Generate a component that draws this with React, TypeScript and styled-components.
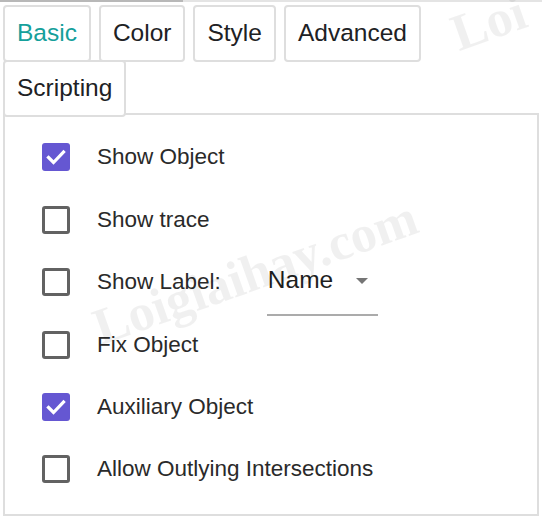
import React from "react";
import styled, { createGlobalStyle } from "styled-components";

const GlobalStyle = createGlobalStyle`
  html, body {
    margin: 0;
    padding: 0;
    background: #ffffff;
  }
  body {
    font-family: "Liberation Sans", Arial, sans-serif;
  }
`;

const Root = styled.div`
  position: relative;
  width: 542px;
  height: 520px;
  overflow: hidden;
  background: #ffffff;
`;

const TopBar = styled.div`
  height: 2px;
  background: linear-gradient(to right, #b8b8b8 0, #b8b8b8 183px, #e4e4e4 183px);
`;

const TabBar = styled.div`
  display: flex;
  flex-wrap: wrap;
  column-gap: 8px;
  padding: 3px 3px 0 3px;
`;

const Tab = styled.div<{ $active?: boolean }>`
  box-sizing: border-box;
  height: 57px;
  margin-bottom: -2px;
  padding: 0 12px 2px;
  display: flex;
  align-items: center;
  border: 2px solid #dedede;
  border-radius: 4px;
  background: #ffffff;
  font-size: 24.5px;
  color: ${(p) => (p.$active ? "#15a09b" : "#202124")};
`;

const Panel = styled.div`
  box-sizing: border-box;
  margin: -2px 3px 0 3px;
  height: 403px;
  padding: 11.3px 0 0 37px;
  border: 2px solid #dedede;
  background: #ffffff;
`;

const Row = styled.div`
  height: 62.4px;
  display: flex;
  align-items: center;
`;

const Box = styled.div<{ $checked?: boolean }>`
  box-sizing: border-box;
  width: 28px;
  height: 28px;
  flex: none;
  border-radius: 3px;
  display: flex;
  align-items: center;
  justify-content: center;
  background: ${(p) => (p.$checked ? "#6557d2" : "#ffffff")};
  border: ${(p) => (p.$checked ? "none" : "3px solid #626262")};
`;

const Label = styled.span`
  margin-left: 27px;
  font-size: 22.5px;
  color: #2a2a2a;
  white-space: nowrap;
`;

const Select = styled.div`
  box-sizing: border-box;
  align-self: flex-start;
  margin-top: 6px;
  margin-left: 46px;
  width: 111px;
  height: 59px;
  padding: 9px 10px 0 1px;
  display: flex;
  align-items: flex-start;
  justify-content: space-between;
  border-bottom: 2px solid #ababab;
`;

const SelectValue = styled.span`
  font-size: 24.5px;
  line-height: 28px;
  color: #1e1e1e;
`;

const Arrow = styled.span`
  margin-top: 12px;
  width: 0;
  height: 0;
  border-left: 6px solid transparent;
  border-right: 6px solid transparent;
  border-top: 6px solid #757575;
`;

const Watermark = styled.div<{ $left: number; $top: number }>`
  position: absolute;
  left: ${(p) => p.$left}px;
  top: ${(p) => p.$top}px;
  font-family: "Liberation Serif", "Times New Roman", serif;
  font-weight: bold;
  font-size: 52px;
  line-height: 52px;
  color: rgba(0, 0, 0, 0.06);
  white-space: nowrap;
  transform-origin: 0 46px;
  transform: rotate(-19.5deg);
  pointer-events: none;
`;

const Check = () => (
  <svg width="28" height="28" viewBox="0 0 28 28">
    <polyline
      points="6.5,14.5 11.5,19.5 21.5,9"
      fill="none"
      stroke="#ffffff"
      strokeWidth="3.2"
      strokeLinecap="square"
    />
  </svg>
);

type Item = { label: string; checked: boolean; select?: string };

const items: Item[] = [
  { label: "Show Object", checked: true },
  { label: "Show trace", checked: false },
  { label: "Show Label:", checked: false, select: "Name" },
  { label: "Fix Object", checked: false },
  { label: "Auxiliary Object", checked: true },
  { label: "Allow Outlying Intersections", checked: false },
];

const tabs = ["Basic", "Color", "Style", "Advanced", "Scripting"];

export default function App() {
  return (
    <Root>
      <GlobalStyle />
      <TopBar />
      <TabBar>
        {tabs.map((t, i) => (
          <Tab key={t} $active={i === 0}>
            {t}
          </Tab>
        ))}
      </TabBar>
      <Panel>
        {items.map((it) => (
          <Row key={it.label}>
            <Box $checked={it.checked}>{it.checked && <Check />}</Box>
            <Label>{it.label}</Label>
            {it.select && (
              <Select>
                <SelectValue>{it.select}</SelectValue>
                <Arrow />
              </Select>
            )}
          </Row>
        ))}
      </Panel>
      <Watermark $left={102} $top={302}>Loigiaihay.com</Watermark>
      <Watermark $left={460} $top={8}>Loi</Watermark>
    </Root>
  );
}
